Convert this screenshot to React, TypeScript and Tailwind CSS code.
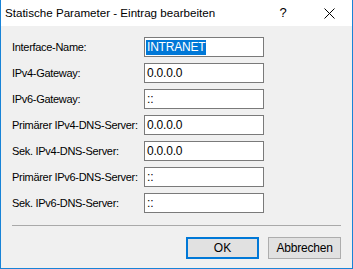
const FIELDS: { label: string; value: string; selected?: boolean }[] = [
  { label: "Interface-Name:", value: "INTRANET", selected: true },
  { label: "IPv4-Gateway:", value: "0.0.0.0" },
  { label: "IPv6-Gateway:", value: "::" },
  { label: "Primärer IPv4-DNS-Server:", value: "0.0.0.0" },
  { label: "Sek. IPv4-DNS-Server:", value: "0.0.0.0" },
  { label: "Primärer IPv6-DNS-Server:", value: "::" },
  { label: "Sek. IPv6-DNS-Server:", value: "::" },
];

function FieldRow({ label, value, selected }: { label: string; value: string; selected?: boolean }) {
  return (
    <div className="flex items-center h-[20px]">
      <span className="w-[132px] whitespace-nowrap text-[11px] tracking-[-0.3px]">{label}</span>
      <div className="w-[120px] h-[20px] border border-[#7a7a7a] bg-white flex items-center px-[1px] text-[12px] tracking-[-0.2px]">
        {selected ? (
          <span className="bg-[#0078d7] text-white leading-[15px] px-[1px]">{value}</span>
        ) : (
          <span className="px-[1px]">{value}</span>
        )}
      </div>
    </div>
  );
}

export default function App() {
  return (
    <div
      className="w-[353px] h-[269px] flex flex-col border-x border-b border-[#1883d7] text-[12px] text-black"
      style={{ fontFamily: '"Liberation Sans", Arial, sans-serif' }}
    >
      <div className="h-[26px] bg-white flex items-center shrink-0">
        <span className="pl-[4px] flex-1 text-[11.6px] whitespace-nowrap">
          Statische Parameter - Eintrag bearbeiten
        </span>
        <span className="w-[46px] text-center text-[13px]">?</span>
        <span className="w-[46px] flex justify-center">
          <svg width="11" height="11" viewBox="0 0 11 11">
            <path d="M0.5 0.5 L10.5 10.5 M10.5 0.5 L0.5 10.5" stroke="#000" strokeWidth="1" fill="none" />
          </svg>
        </span>
      </div>
      <div className="flex-1 bg-[#f0f0f0] flex flex-col pl-[11px] pr-[11px]">
        <div className="flex flex-col gap-[6px] pt-[11px]">
          {FIELDS.map((f) => (
            <FieldRow key={f.label} {...f} />
          ))}
        </div>
        <div className="mt-[12px] h-[1px] bg-[#a9a9a9]" />
        <div className="flex justify-end gap-[9px] mt-[11px]">
          <button className="w-[73px] h-[22px] bg-[#e1e1e1] border-2 border-[#0078d7]">OK</button>
          <button className="w-[73px] h-[22px] bg-[#e1e1e1] border border-[#adadad] tracking-[-0.2px]">Abbrechen</button>
        </div>
      </div>
    </div>
  );
}
